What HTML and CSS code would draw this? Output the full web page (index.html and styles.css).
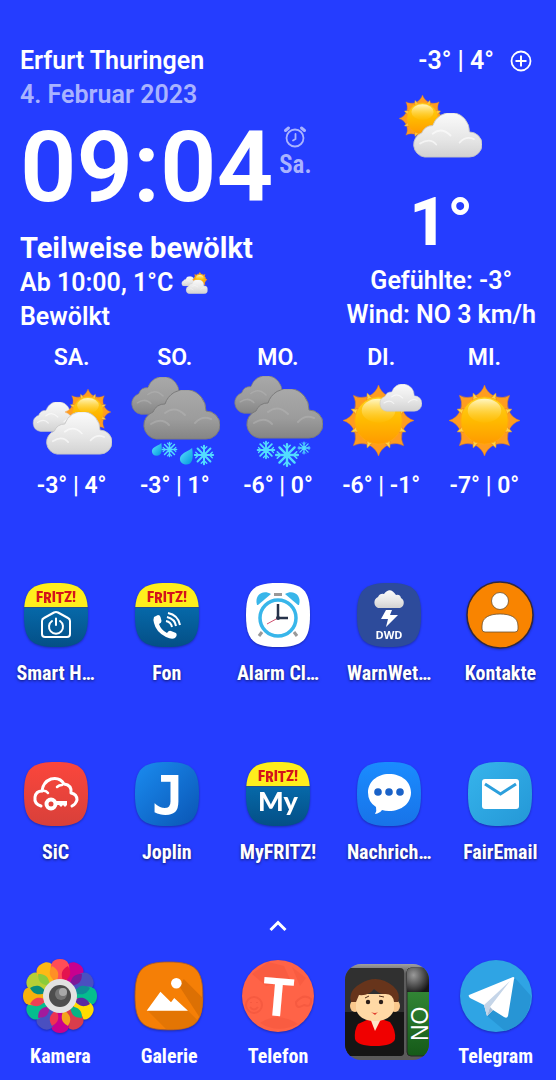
FILE: index.html
```html
<!DOCTYPE html>
<html lang="de">
<head>
  <meta charset="UTF-8">
  <meta name="viewport" content="width=device-width, initial-scale=1.0">
  <title>Startbildschirm</title>
  <link rel="stylesheet" href="styles.css">
</head>
<body>
  <!-- shared shapes and gradients -->
  <svg class="defs" aria-hidden="true">
    <defs>
      <linearGradient id="g-sun" x1="0" y1="0" x2="0" y2="1">
        <stop offset="0" stop-color="#ffd21f"/><stop offset=".5" stop-color="#ffba00"/><stop offset="1" stop-color="#ff9a00"/>
      </linearGradient>
      <linearGradient id="g-shine" x1="0" y1="0" x2="0" y2="1">
        <stop offset="0" stop-color="#fff6c4"/><stop offset="1" stop-color="#ffc918" stop-opacity=".2"/>
      </linearGradient>
      <linearGradient id="g-light" x1="0" y1="0" x2="0" y2="1">
        <stop offset="0" stop-color="#fbfbfb"/><stop offset=".6" stop-color="#e6e6e6"/><stop offset="1" stop-color="#d2d2d2"/>
      </linearGradient>
      <linearGradient id="g-grey" x1="0" y1="0" x2="0" y2="1">
        <stop offset="0" stop-color="#a9a9a9"/><stop offset=".6" stop-color="#9c9c9c"/><stop offset="1" stop-color="#858585"/>
      </linearGradient>
      <linearGradient id="g-fritz" x1="0" y1="0" x2="0" y2="1">
        <stop offset=".4" stop-color="#0668a8"/><stop offset="1" stop-color="#044f86"/>
      </linearGradient>
      <linearGradient id="g-drop" x1="0" y1="0" x2="1" y2="1">
        <stop offset="0" stop-color="#5fe6ff"/><stop offset="1" stop-color="#0096dc"/>
      </linearGradient>
      <linearGradient id="g-sic" x1="0" y1="0" x2="0" y2="1">
        <stop offset="0" stop-color="#fb463c"/><stop offset="1" stop-color="#d8403a"/>
      </linearGradient>
      <linearGradient id="g-joplin" x1="0" y1="0" x2="1" y2="1">
        <stop offset="0" stop-color="#1a8cf0"/><stop offset="1" stop-color="#0a55b4"/>
      </linearGradient>
      <linearGradient id="g-msg" x1="0" y1="0" x2="0" y2="1">
        <stop offset="0" stop-color="#1a8cff"/><stop offset="1" stop-color="#1873e8"/>
      </linearGradient>
      <linearGradient id="g-mail" x1="0" y1="0" x2="1" y2="1">
        <stop offset="0" stop-color="#36b4ec"/><stop offset="1" stop-color="#2497d6"/>
      </linearGradient>
      <linearGradient id="g-frame" x1="0" y1="0" x2="0" y2="1">
        <stop offset="0" stop-color="#a0a0a0"/><stop offset=".1" stop-color="#5c5c5c"/><stop offset="1" stop-color="#5a5a5a"/>
      </linearGradient>
      <radialGradient id="g-knob" cx=".3" cy=".3" r=".8">
        <stop offset="0" stop-color="#9a9a9a"/><stop offset="1" stop-color="#161616"/>
      </radialGradient>
      <linearGradient id="g-green" x1="0" y1="0" x2="0" y2="1">
        <stop offset="0" stop-color="#3c9440"/><stop offset="1" stop-color="#155a18"/>
      </linearGradient>
      <path id="squircle" d="M0 32C0 7 7 0 32 0S64 7 64 32 57 64 32 64 0 57 0 32Z"/>
      <clipPath id="clip-squircle"><use href="#squircle"/></clipPath>
      <clipPath id="clip-contact"><rect width="84" height="96" rx="16"/></clipPath>
      <path id="ray" d="M0-36Q2-29 9-25L0-19-9-25Q-2-29 0-36Z"/>
      <path id="ray-small" d="M0-30L4-22H-4Z"/>
      <path id="cloud-shape" d="M14 49A14 14 0 0 1 11 22 12 12 0 0 1 23 14 21 21 0 0 1 64 21 14 14 0 0 1 64 49Z"/>
      <path id="petal" d="M0-37C8-37 10-31 9-26L5-8H-5L-9-26C-10-31-8-37 0-37Z"/>
      <path id="facet" d="M0-31C5-26 6-22 0-14C-6-22-5-26 0-31Z"/>
    </defs>

    <symbol id="sun" viewBox="-36 -36 72 72">
      <g fill="#ffd24a" stroke="#e9a11c" stroke-width=".5">
        <use href="#ray-small" transform="rotate(22.5)"/><use href="#ray-small" transform="rotate(67.5)"/>
        <use href="#ray-small" transform="rotate(112.5)"/><use href="#ray-small" transform="rotate(157.5)"/>
        <use href="#ray-small" transform="rotate(202.5)"/><use href="#ray-small" transform="rotate(247.5)"/>
        <use href="#ray-small" transform="rotate(292.5)"/><use href="#ray-small" transform="rotate(337.5)"/>
      </g>
      <g fill="#ff9c1f" stroke="#f08512" stroke-width=".5">
        <use href="#ray"/><use href="#ray" transform="rotate(45)"/>
        <use href="#ray" transform="rotate(90)"/><use href="#ray" transform="rotate(135)"/>
        <use href="#ray" transform="rotate(180)"/><use href="#ray" transform="rotate(225)"/>
        <use href="#ray" transform="rotate(270)"/><use href="#ray" transform="rotate(315)"/>
      </g>
      <circle r="24" fill="url(#g-sun)" stroke="#ffa90f" stroke-width="1"/>
      <ellipse cy="-10" rx="17" ry="12" fill="url(#g-shine)"/>
    </symbol>
    <symbol id="cloud" viewBox="0 0 78 50">
      <use href="#cloud-shape" fill="url(#g-light)" stroke="#c6c6c6" stroke-width="1"/>
      <path d="M23 23Q33 15 43 25M9 34Q20 27 27 35M53 33Q60 25 69 29" fill="none" stroke="#fff" stroke-width="2" stroke-linecap="round" opacity=".6"/>
    </symbol>
    <symbol id="cloud-grey" viewBox="0 0 78 50">
      <use href="#cloud-shape" fill="url(#g-grey)" stroke="#7c7c7c" stroke-width="1"/>
      <path d="M23 23Q33 15 43 25M9 34Q20 27 27 35M53 33Q60 25 69 29" fill="none" stroke="#b5b5b5" stroke-width="2" stroke-linecap="round" opacity=".5"/>
    </symbol>
    <symbol id="flake" viewBox="-12 -12 24 24">
      <g fill="none" stroke="#52dcff" stroke-width="2.2" stroke-linecap="round">
        <path d="M0-10V10M-10 0H10M-7-7L7 7M-7 7L7-7"/>
        <path d="M-3-9L0-6 3-9M-3 9L0 6 3 9M-9-3L-6 0-9 3M9-3L6 0 9 3" stroke-width="1.5"/>
      </g>
    </symbol>
    <symbol id="drop" viewBox="0 0 16 18">
      <path d="M14 0C15 7 16 17 8 17.500 1 17.500-1 11 3 7 6 4 11 3 14 0Z" fill="url(#g-drop)"/>
    </symbol>
    <symbol id="partly" viewBox="0 0 80 66">
      <use href="#cloud" x="0" y="13" width="47" height="30"/>
      <use href="#sun" x="33" y="0" width="46" height="46"/>
      <use href="#cloud" x="13" y="23" width="67" height="43"/>
    </symbol>
    <symbol id="fritz" viewBox="0 0 64 64">
      <g clip-path="url(#clip-squircle)">
        <rect width="64" height="64" fill="url(#g-fritz)"/>
        <rect width="64" height="24" fill="#ffee1c"/>
        <path d="M0 24.500H64" stroke="#27518a" stroke-width="1"/>
      </g>
      <text x="32" y="19" class="fritz-text" text-anchor="middle">F<tspan dy="1">R</tspan><tspan dy="-1">I</tspan><tspan dy="1">T</tspan><tspan dy="-1">Z!</tspan></text>
    </symbol>
  </svg>

  <main class="home">
    <section class="weather">
      <div class="now">
        <h1 class="city">Erfurt Thuringen</h1>
        <p class="date">4. Februar 2023</p>
        <div class="clock">
          <time class="time">09:04</time>
          <div class="alarm">
            <svg width="22" height="22" viewBox="0 0 22 22" fill="none" stroke="currentColor" stroke-width="1.800" stroke-linecap="round">
              <circle cx="11" cy="12" r="8.500"/>
              <path d="M11.500 8V13L9 14.500"/>
              <path d="M1.500 4.500L4.500 2M20.500 4.500L17.500 2" stroke-width="3"/>
            </svg>
            <span>Sa.</span>
          </div>
        </div>
        <p class="condition">Teilweise bewölkt</p>
        <p class="next">Ab 10:00, 1°C
          <svg width="27" height="22" viewBox="0 0 80 66"><use href="#partly"/></svg>
        </p>
        <p class="next">Bewölkt</p>
      </div>

      <div class="current">
        <div class="range">
          <span>-3° | 4°</span>
          <button class="add" type="button" aria-label="Ort hinzufügen">
            <svg width="22" height="22" viewBox="0 0 22 22" fill="none" stroke="currentColor" stroke-width="1.800">
              <circle cx="11" cy="11" r="9.500"/><path d="M11 5.500V16.500M5.500 11H16.500" stroke-width="2"/>
            </svg>
          </button>
        </div>
        <svg class="current-icon" width="84" height="64" viewBox="0 0 84 64">
          <use href="#sun" x="0" y="0" width="47" height="47"/>
          <use href="#cloud" x="13" y="18" width="70" height="45"/>
        </svg>
        <p class="temp">1°</p>
        <p class="detail">Gefühlte: -3°</p>
        <p class="detail">Wind: NO 3 km/h</p>
      </div>
    </section>

    <ul class="forecast">
      <li class="day">
        <span>SA.</span>
        <svg width="90" height="90" viewBox="0 0 90 90">
          <use href="#partly" x="5" y="12" width="80" height="66"/>
        </svg>
        <span>-3° | 4°</span>
      </li>
      <li class="day">
        <span>SO.</span>
        <svg width="90" height="90" viewBox="0 0 90 90">
          <use href="#cloud-grey" x="0" y="0" width="60" height="38"/>
          <use href="#cloud-grey" x="12" y="13" width="78" height="50"/>
          <use href="#drop" x="21" y="66" width="12" height="13"/>
          <use href="#flake" x="31" y="64" width="17" height="17"/>
          <use href="#drop" x="49" y="71" width="15" height="17"/>
          <use href="#flake" x="63" y="67" width="22" height="22"/>
        </svg>
        <span>-3° | 1°</span>
      </li>
      <li class="day">
        <span>MO.</span>
        <svg width="90" height="90" viewBox="0 0 90 90">
          <use href="#cloud-grey" x="0" y="-1" width="60" height="38"/>
          <use href="#cloud-grey" x="12" y="12" width="78" height="50"/>
          <use href="#flake" x="23" y="63" width="20" height="20"/>
          <use href="#flake" x="41" y="65" width="26" height="26"/>
          <use href="#flake" x="64" y="64" width="14" height="14"/>
        </svg>
        <span>-6° | 0°</span>
      </li>
      <li class="day">
        <span>DI.</span>
        <svg width="90" height="90" viewBox="0 0 90 90">
          <use href="#sun" x="7" y="8" width="71" height="71"/>
          <use href="#cloud" x="43" y="7" width="43" height="28"/>
        </svg>
        <span>-6° | -1°</span>
      </li>
      <li class="day">
        <span>MI.</span>
        <svg width="90" height="90" viewBox="0 0 90 90">
          <use href="#sun" x="10" y="8" width="71" height="71"/>
        </svg>
        <span>-7° | 0°</span>
      </li>
    </ul>

    <nav class="apps" aria-label="Apps">
      <a class="app" href="#">
        <svg class="icon" viewBox="0 0 64 64">
          <use href="#fritz"/>
          <g fill="none" stroke="#fff" stroke-width="2" stroke-linecap="round" stroke-linejoin="round">
            <path d="M18 38Q18 36 20 35L30 29.500Q32 28.500 34 29.500L44 35Q46 36 46 38V51Q46 54 43 54H21Q18 54 18 51Z"/>
            <path d="M28 38A7 7 0 1 0 36 38M32 35.500V42"/>
          </g>
        </svg>
        <span class="label">Smart H…</span>
      </a>
      <a class="app" href="#">
        <svg class="icon" viewBox="0 0 64 64">
          <use href="#fritz"/>
          <path d="M19 34L23 32Q25 32 25.500 34L26.500 38Q26.500 40 24 41Q26 47 32 50Q34 47 36 48L41 50Q42 51 41.500 53L40 55Q37 57 31 54Q21 49 19 40Q18 36 19 34Z" fill="#fff"/>
          <path d="M31 38Q36 39 37 44M32 34Q40 36 41 43M33 30Q43 32 45 42" fill="none" stroke="#fff" stroke-width="2"/>
        </svg>
        <span class="label">Fon</span>
      </a>
      <a class="app" href="#">
        <svg class="icon" viewBox="0 0 64 64">
          <use href="#squircle" fill="#fff"/>
          <path d="M11 22C8 12 17 6 25 11L12 22Z" fill="#38b6ea"/>
          <path d="M53 22C56 12 47 6 39 11L52 22Z" fill="#38b6ea"/>
          <rect x="28" y="10" width="8" height="3" fill="#999"/>
          <path d="M16 49L13 53M48 49L51 53" stroke="#999" stroke-width="3"/>
          <circle cx="32" cy="35" r="18" fill="#fff" stroke="#38b6ea" stroke-width="3.500"/>
          <path d="M32 35V21M32 35H42" stroke="#26324a" stroke-width="2.500" fill="none"/>
          <path d="M32 35L21 41" stroke="#d05070" stroke-width="1"/>
          <circle cx="32" cy="35" r="2" fill="#26324a"/>
        </svg>
        <span class="label">Alarm Cl…</span>
      </a>
      <a class="app" href="#">
        <svg class="icon" viewBox="0 0 64 64">
          <use href="#squircle" fill="#2d4b9b"/>
          <path d="M21 25A6 6 0 0 1 21 14Q23 10 27 11Q33 3 39 12Q43 11 44 15A5.500 5.500 0 0 1 43 25Z" fill="url(#g-light)"/>
          <path d="M29 27H35L33 32H41L29 44 31 36H24Z" fill="#fff"/>
          <text x="32" y="56" class="dwd-text" text-anchor="middle">DWD</text>
        </svg>
        <span class="label">WarnWet…</span>
      </a>
      <a class="app" href="#">
        <svg class="icon" viewBox="0 0 64 64">
          <circle cx="32" cy="32" r="33" fill="#f98400" stroke="#33283c" stroke-width="1.500"/>
          <g fill="#fff" stroke="#6b5030" stroke-width=".8">
            <circle cx="32" cy="18" r="8.500"/>
            <path d="M14 43C14 34 22 31 32 31S50 34 50 43V46Q50 49 47 49H17Q14 49 14 46Z"/>
          </g>
        </svg>
        <span class="label">Kontakte</span>
      </a>
      <a class="app" href="#">
        <svg class="icon" viewBox="0 0 64 64">
          <use href="#squircle" fill="url(#g-sic)"/>
          <path d="M17 44Q10 42 11 35Q12 29 18 29Q19 20 27 17Q36 15 40 22Q48 23 47 31Q53 32 53 38Q52 42 48 44" fill="none" stroke="#fff" stroke-width="3" stroke-linecap="round" stroke-linejoin="round"/>
          <path d="M18 29Q22 28 24 31M38 23Q35 23 33 25" fill="none" stroke="#fff" stroke-width="2.500" stroke-linecap="round"/>
          <circle cx="27" cy="42" r="4.500" fill="none" stroke="#fff" stroke-width="4"/>
          <path d="M31 39H43V43L41 45 39 43 37 45 35 43H31Z" fill="#fff"/>
        </svg>
        <span class="label">SiC</span>
      </a>
      <a class="app" href="#">
        <svg class="icon" viewBox="0 0 64 64">
          <use href="#squircle" fill="url(#g-joplin)"/>
          <text x="33" y="52" class="joplin-text" text-anchor="middle">J</text>
        </svg>
        <span class="label">Joplin</span>
      </a>
      <a class="app" href="#">
        <svg class="icon" viewBox="0 0 64 64">
          <use href="#fritz"/>
          <text x="32" y="49" class="my-text" text-anchor="middle">My</text>
        </svg>
        <span class="label">MyFRITZ!</span>
      </a>
      <a class="app" href="#">
        <svg class="icon" viewBox="0 0 64 64">
          <use href="#squircle" fill="url(#g-msg)"/>
          <path d="M32 12C45 12 54 20 54 30.500S45 49 32 49Q28 49 25 48Q23 51 18 52Q20 49 19 45Q11 40 11 30.500C11 20 20 12 32 12Z" fill="#fff"/>
          <g fill="#1a62c8"><circle cx="21" cy="30" r="3.800"/><circle cx="32" cy="30" r="3.800"/><circle cx="43" cy="30" r="3.800"/></g>
        </svg>
        <span class="label">Nachrich…</span>
      </a>
      <a class="app" href="#">
        <svg class="icon" viewBox="0 0 64 64">
          <use href="#squircle" fill="url(#g-mail)"/>
          <rect x="14" y="17" width="37" height="30" rx="3" fill="#fff"/>
          <path d="M17 22L32.500 32 48 22" fill="none" stroke="#2c9fdc" stroke-width="3"/>
        </svg>
        <span class="label">FairEmail</span>
      </a>
    </nav>

    <button class="drawer" type="button" aria-label="Alle Apps">
      <svg width="24" height="24" viewBox="0 0 24 24" fill="none" stroke="#fff" stroke-width="3"><path d="M4.500 16L12 8.500 19.500 16"/></svg>
    </button>

    <nav class="dock" aria-label="Favoriten">
      <a class="app" href="#">
        <svg class="dock-icon" viewBox="-38 -38 76 76">
          <use href="#petal" fill="#c9008f" transform="rotate(30)"/>
          <use href="#petal" fill="#4a4fc0" transform="rotate(60)"/>
          <use href="#petal" fill="#05bd8e" transform="rotate(90)"/>
          <use href="#petal" fill="#ffdc00" transform="rotate(120)"/>
          <use href="#petal" fill="#d93d4c" transform="rotate(150)"/>
          <use href="#petal" fill="#c9008f" transform="rotate(180)"/>
          <use href="#petal" fill="#4a4fc0" transform="rotate(210)"/>
          <use href="#petal" fill="#05bd8e" transform="rotate(240)"/>
          <use href="#petal" fill="#f7b10c" transform="rotate(270)"/>
          <use href="#petal" fill="#b6cf35" transform="rotate(300)"/>
          <use href="#petal" fill="#fdb915" transform="rotate(330)"/>
          <use href="#petal" fill="#ff4d57"/>
          <use href="#facet" fill="#e3134e" transform="rotate(15)"/>
          <use href="#facet" fill="#7d1898" transform="rotate(45)"/>
          <use href="#facet" fill="#0f8b97" transform="rotate(75)"/>
          <use href="#facet" fill="#5b2ba0" transform="rotate(105)"/>
          <use href="#facet" fill="#07b384" transform="rotate(135)"/>
          <use href="#facet" fill="#f5a31c" transform="rotate(165)"/>
          <use href="#facet" fill="#ee3451" transform="rotate(195)"/>
          <use href="#facet" fill="#a21a9c" transform="rotate(225)"/>
          <use href="#facet" fill="#ec3f55" transform="rotate(255)"/>
          <use href="#facet" fill="#078c7c" transform="rotate(285)"/>
          <use href="#facet" fill="#8acb3b" transform="rotate(315)"/>
          <use href="#facet" fill="#ff8f25" transform="rotate(345)"/>
          <circle r="17" fill="#e2e2e2"/>
          <circle r="11" fill="#4d4d4d"/>
          <circle cx="1" cy="-2" r="6" fill="#747474"/>
          <circle cx="3" cy="-4" r="4" fill="#a8a8a8"/>
        </svg>
        <span class="label">Kamera</span>
      </a>
      <a class="app" href="#">
        <svg class="dock-icon" viewBox="-6 -6 76 76">
          <g transform="translate(-2 -2) scale(1.06)">
            <use href="#squircle" fill="#f57f06" stroke="#a85a2c" stroke-width=".8"/>
            <g clip-path="url(#clip-squircle)" fill="#dc7004">
              <path d="M42 23L46 16 66 36V60Z"/><path d="M12 46H50L64 60V66H32Z" opacity=".7"/>
            </g>
            <circle cx="39" cy="20" r="5" fill="#fff"/>
            <path d="M11 46L24 28 34 38 37 34 50 46Z" fill="#fff"/>
          </g>
        </svg>
        <span class="label">Galerie</span>
      </a>
      <a class="app" href="#">
        <svg class="dock-icon" viewBox="-38 -38 76 76">
          <circle r="36" fill="#ff6347"/>
          <g fill="none" stroke="#f65a40" stroke-width="2">
            <circle cx="-24" cy="9" r="8"/><path d="M-28 11Q-24 16-20 11M-27 6V7M-21 6V7"/>
            <path d="M18 6Q26-3 33 3Q34 12 26 9Q18 14 18 6Z"/>
          </g>
          <path d="M-26-22L-10-34 6-30 12-17-12-10ZM14-29L28-18 22-10ZM-18 27Q0 15 20 28Q0 38-18 27Z" fill="#f4553b" opacity=".5"/>
          <text y="20" class="telefon-text" text-anchor="middle" transform="rotate(5)">T</text>
        </svg>
        <span class="label">Telefon</span>
      </a>
      <a class="contact" href="#" aria-label="Direktwahl NO">
        <svg width="84" height="96" viewBox="0 0 84 96">
          <g clip-path="url(#clip-contact)">
            <rect width="84" height="96" fill="url(#g-frame)"/>
            <rect x="0" y="4" width="59" height="88" rx="4" fill="#303030"/>
            <path d="M0 48H59V88Q59 92 55 92H0Z" fill="#151515"/>
            <rect x="62" y="4" width="24" height="88" rx="4" fill="url(#g-green)" stroke="#262626"/>
            <path d="M62 28V8Q62 4 66 4H84V28Z" fill="url(#g-knob)"/>
          </g>
          <path d="M24 55L13 60Q9 66 10 75Q12 82 30 82Q48 82 50 75Q51 66 45 58L36 55Z" fill="#f00000"/>
          <path d="M25 54L30 67 36 55Z" fill="#ffe7c9"/>
          <ellipse cx="10" cy="42" rx="5" ry="6" fill="#fac88d"/><ellipse cx="50" cy="42" rx="5" ry="6" fill="#fac88d"/>
          <path d="M11 30H49V45Q46 57 30 57T11 45Z" fill="#ffd9a5"/>
          <path d="M6 38Q3 27 15 20Q32 9 48 22Q56 29 53 38L49 38Q48 29 39 30Q34 30 29 25Q24 32 14 31L11 38Z" fill="#67341b"/>
          <g fill="#2a1d18"><circle cx="23" cy="38" r="2.200"/><circle cx="36" cy="38" r="2.200"/></g>
          <path d="M20 34L24 32M34 32L39 33" stroke="#4a2a1a" fill="none"/>
          <path d="M26 48Q30 50 33 48L30 51Z" fill="#e04030"/>
          <text class="no-text" transform="translate(83 77) rotate(-90)">NO</text>
        </svg>
      </a>
      <a class="app" href="#">
        <svg class="dock-icon" viewBox="-38 -38 76 76">
          <circle r="36" fill="#2fa4e4"/>
          <path d="M19-18L35 0Q34 28 9 35L-10 19Z" fill="#2795d5"/>
          <path d="M-27-1L17-19Q19-19 18-17L12 20Q11 23 8 21L-3 14-9 20-12 9-26 2Q-28 0-27-1Z" fill="#fff"/>
          <path d="M-12 9L14-15-6 11-9 20Z" fill="#c5d5e8"/>
          <path d="M-6 11L-3 14-9 20Z" fill="#a4bcd6"/>
        </svg>
        <span class="label">Telegram</span>
      </a>
    </nav>
  </main>
</body>
</html>
```
FILE: styles.css
```css
* {
  box-sizing: border-box;
}
body {
  margin: 0;
  min-height: 100vh;
  background-color: #253dff;
  color: #fff;
  font-family: Roboto, "Liberation Sans", sans-serif;
  font-weight: 600;
}
h1, p, ul {
  margin: 0;
  padding: 0;
}
svg {
  display: block;
  overflow: visible;
}
a {
  color: inherit;
  text-decoration: none;
}
button {
  padding: 0;
  border: none;
  background: none;
  color: inherit;
  cursor: pointer;
}
.defs {
  position: absolute;
  width: 0;
  height: 0;
}
.home {
  padding-top: 44px;
}

/* weather widget */
.weather {
  display: flex;
  justify-content: space-between;
  padding: 0 20px;
  font-size: 25px;
  line-height: 34px;
  white-space: nowrap;
}
.city {
  font-size: 25px;
  font-weight: 600;
}
.date, .alarm {
  color: #a9b3ff;
}
.clock {
  display: flex;
  gap: 6px;
}
.time {
  font-size: 99px;
  line-height: 110px;
}
.alarm {
  display: flex;
  flex-direction: column;
  align-items: center;
  padding-top: 14px;
  font-family: "Roboto Condensed", Roboto, sans-serif;
}
.condition {
  margin-top: 8px;
  font-size: 29px;
  font-weight: 700;
  line-height: 36px;
}
.next {
  display: flex;
  align-items: center;
  gap: 8px;
}
.current {
  display: flex;
  flex-direction: column;
  align-items: center;
}
.range {
  display: flex;
  align-items: center;
  align-self: flex-end;
  gap: 16px;
  padding-right: 4px;
}
.current-icon {
  margin-top: 17px;
}
.temp {
  margin-top: 30px;
  font-size: 66px;
  font-weight: 800;
  line-height: 68px;
}
.detail:nth-of-type(2) {
  margin-top: 7px;
}
.forecast {
  display: grid;
  grid-template-columns: repeat(5, 1fr);
  padding: 8px 20px 0;
  list-style: none;
  font-size: 23px;
  line-height: 32px;
  white-space: nowrap;
}
.day {
  display: flex;
  flex-direction: column;
  align-items: center;
  gap: 3px;
}

/* app icons */
.apps {
  display: grid;
  grid-template-columns: repeat(5, 1fr);
  row-gap: 75px;
  margin-top: 81px;
}
.app {
  display: flex;
  flex-direction: column;
  align-items: center;
  gap: 12px;
}
.icon {
  width: 64px;
  height: 64px;
  filter: drop-shadow(0 1px 1px rgba(0, 0, 0, 0.3));
}
.label {
  font-family: "Roboto Condensed", "Liberation Sans Narrow", Roboto, sans-serif;
  font-size: 20px;
  font-weight: 700;
  line-height: 28px;
  white-space: nowrap;
  text-shadow: 0 1px 3px rgba(0, 0, 0, 0.6);
}
.drawer {
  display: block;
  margin: 48px auto 20px;
}
.dock {
  display: grid;
  grid-template-columns: repeat(5, 1fr);
  padding: 0 6px 8px;
}
.dock .app {
  gap: 8px;
}
.dock .label {
  text-shadow: none;
}
.dock-icon {
  width: 76px;
  height: 76px;
  filter: drop-shadow(0 1px 1px rgba(0, 0, 0, 0.3));
}
.contact {
  justify-self: center;
  padding-top: 6px;
}

/* lettering inside the icons */
.fritz-text {
  font: 900 15px "Roboto Condensed", sans-serif;
  fill: #d3131b;
}
.dwd-text {
  font: 700 11px "Open Sans", sans-serif;
  fill: #fff;
}
.joplin-text {
  font: 700 54px "DejaVu Sans Mono", monospace;
  fill: #fff;
}
.my-text {
  font: 900 27px Lato, sans-serif;
  fill: #fff;
}
.telefon-text {
  font: 900 52px Lato, sans-serif;
  fill: #fff;
}
.no-text {
  font: 400 23px "Liberation Sans", sans-serif;
  fill: #fff;
}
```
